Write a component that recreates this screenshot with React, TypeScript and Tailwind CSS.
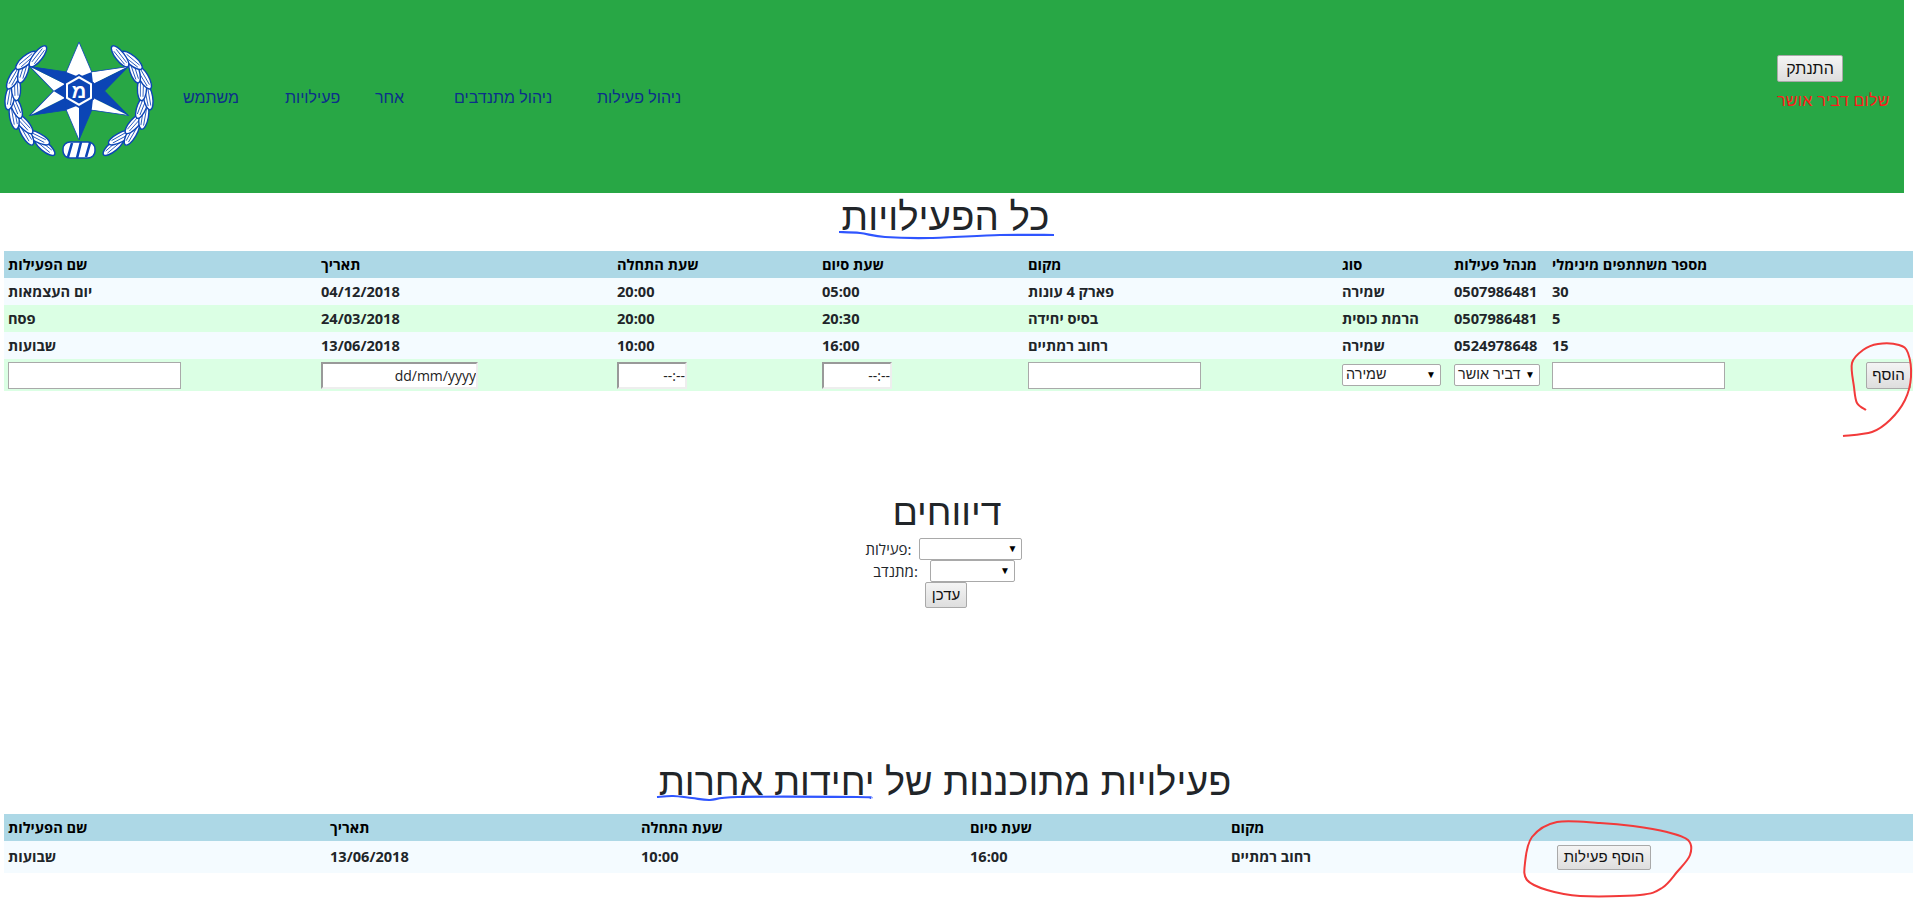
const FONT = "font-['Open_Sans','Liberation_Sans',sans-serif]";
const BLUE = "#0b45b5";

type Row = string[];

const activities: Row[] = [
  ["יום העצמאות", "04/12/2018", "20:00", "05:00", "פארק 4 עונות", "שמירה", "0507986481", "30"],
  ["פסח", "24/03/2018", "20:00", "20:30", "בסיס יחידה", "הרמת כוסית", "0507986481", "5"],
  ["שבועות", "13/06/2018", "10:00", "16:00", "רחוב רמתיים", "שמירה", "0524978648", "15"],
];

const headers = ["שם הפעילות", "תאריך", "שעת התחלה", "שעת סיום", "מקום", "סוג", "מנהל פעילות", "מספר משתתפים מינימלי"];

function Leaf({ x, y, rot }: { x: number; y: number; rot: number }) {
  return (
    <g transform={`translate(${x} ${y}) rotate(${rot})`}>
      <ellipse rx="13" ry="4.6" fill="#fff" stroke={BLUE} strokeWidth="1.4" />
      <path d="M-9 -1.4 L8 -1.8 M-9 1.3 L8 1.3" stroke={BLUE} strokeWidth="0.8" />
    </g>
  );
}

// star facets per tip, [left, right] seen from the centre
const tips: [number, string, string][] = [
  [0, "#fff", "#fff"],
  [60, "#fff", BLUE],
  [120, BLUE, "#fff"],
  [180, BLUE, "#fff"],
  [240, BLUE, "#fff"],
  [300, "#fff", BLUE],
];

function Logo() {
  const leaves: { x: number; y: number; rot: number }[] = [];
  // wreath: leaves follow the oval, paired inner and outer, open at the top
  [-1, 1].forEach((side) => {
    for (let a = 30; a <= 146; a += 10) {
      const rad = (a * Math.PI) / 180;
      const odd = Math.round((a - 30) / 10) % 2 === 1;
      const rx = odd ? 64 : 69;
      const ry = odd ? 53 : 57;
      const x = 79 + side * rx * Math.sin(rad);
      const y = 94 + ry * Math.cos(rad);
      const rot = -side * a + (odd ? side * 12 : -side * 10);
      leaves.push({ x, y, rot });
    }
  });
  return (
    <svg width="160" height="128" viewBox="0 30 160 128" className="shrink-0">
      {leaves.map((l, i) => (
        <Leaf key={i} x={l.x} y={l.y} rot={l.rot} />
      ))}
      <g transform="translate(79 88) scale(1.16 1)">
        <path d="M-11 -19 L11 -19 L22 0 L11 19 L-11 19 L-22 0 Z" fill={BLUE} />
        {tips.map(([t, left, right]) => (
          <g key={t} transform={`rotate(${t})`}>
            <path d="M0 -49 L-11 -19 L0 -14 Z" fill={left} />
            <path d="M0 -49 L11 -19 L0 -14 Z" fill={right} />
            <path d="M-11 -19 L0 -49 L11 -19" fill="none" stroke={BLUE} strokeWidth="0.8" />
          </g>
        ))}
      </g>
      <g transform="translate(79 88)">
        <path d="M0 -17 L15 -8.5 L15 8.5 L0 17 L-15 8.5 L-15 -8.5 Z" fill={BLUE} />
        <path d="M0 -15 L13 -7.5 L13 7.5 L0 15 L-13 7.5 L-13 -7.5 Z" fill="#fff" />
        <path d="M0 -12.5 L11 -6.3 L11 6.3 L0 12.5 L-11 6.3 L-11 -6.3 Z" fill={BLUE} />
        <text x="0" y="7" textAnchor="middle" fontSize="20" fontWeight="700" fill="#fff" fontFamily="'Liberation Sans', sans-serif">
          מ
        </text>
      </g>
      <g transform="translate(79 147)">
        <rect x="-16" y="-8" width="32" height="16" rx="7" fill="#fff" stroke={BLUE} strokeWidth="1.5" />
        <path d="M-11 7 L-7 -7 M-2 8 L2 -8 M7 7 L11 -7" stroke={BLUE} strokeWidth="2.6" />
      </g>
    </svg>
  );
}

function GrayButton({ children, className }: { children: string; className: string }) {
  return (
    <button
      type="button"
      className={`border border-[#a9a9a9] bg-linear-to-b from-[#f4f4f4] to-[#dedede] rounded-[2px] text-[#111] ${className}`}
    >
      {children}
    </button>
  );
}

function FakeSelect({ value, className }: { value?: string; className: string }) {
  return (
    <div className={`relative border border-[#a9a9a9] rounded-[2px] bg-white flex items-center pl-[3px] text-[14.4px] font-normal text-[#222] font-['Liberation_Sans',sans-serif] ${className}`}>
      <span>{value}</span>
      <span className="absolute right-[4px] top-[2px] text-[10px] text-black">▼</span>
    </div>
  );
}

function TextBox({ className, inset, hint }: { className: string; inset?: boolean; hint?: string }) {
  return (
    <input
      type="text"
      placeholder={hint}
      className={`block h-[27px] bg-white text-right text-[14px] font-normal outline-none placeholder:text-[#222] ${
        inset ? "border-2 border-t-[#999] border-l-[#999] border-r-[#eee] border-b-[#eee]" : "border border-[#a9a9a9]"
      } ${className}`}
    />
  );
}

// smooth line through the points of a hand drawn mark
function smooth(pts: number[][], closed = false) {
  const n = pts.length;
  const at = (i: number) => (closed ? pts[(i + n) % n] : pts[Math.max(0, Math.min(n - 1, i))]);
  let d = `M${pts[0][0]} ${pts[0][1]}`;
  const last = closed ? n : n - 1;
  for (let i = 0; i < last; i++) {
    const [p0, p1, p2, p3] = [at(i - 1), at(i), at(i + 1), at(i + 2)];
    const c1 = [p1[0] + (p2[0] - p0[0]) / 6, p1[1] + (p2[1] - p0[1]) / 6];
    const c2 = [p2[0] - (p3[0] - p1[0]) / 6, p2[1] - (p3[1] - p1[1]) / 6];
    d += ` C${c1[0]} ${c1[1]} ${c2[0]} ${c2[1]} ${p2[0]} ${p2[1]}`;
  }
  return d;
}

const cellClass = "px-[4px] py-0 whitespace-nowrap";

export default function App() {
  return (
    <div className={`${FONT} relative min-h-[922px] w-full overflow-hidden bg-white text-[#212529]`}>
      <header className="w-[1904px] h-[193px] bg-[#28a745] flex items-center">
        <Logo />
        <nav className="flex items-center ml-[23px] mt-[3px] text-[16px] text-[#0c2f8a] font-['Liberation_Sans',sans-serif]">
          <a className="w-[102px]">משתמש</a>
          <a className="w-[90px]">פעילויות</a>
          <a className="w-[79px]">אחר</a>
          <a className="w-[143px]">ניהול מתנדבים</a>
          <a>ניהול פעילות</a>
        </nav>
        <div className="ml-auto mr-[16px] self-start mt-[55px] w-[111px]">
          <GrayButton className="block w-[66px] h-[27px] text-[16px] font-['Liberation_Sans',sans-serif]">התנתק</GrayButton>
          <p className="mt-[9px] text-[16px] leading-[20px] tracking-[0.25px] text-[#ff1a1a] whitespace-nowrap font-['Liberation_Sans',sans-serif]">שלום דביר אושר</p>
        </div>
      </header>

      <h1 className="h-[58px] w-[1891px] text-center text-[38.5px] leading-[48px] font-['Liberation_Sans',sans-serif]">כל הפעילויות</h1>

      <div className="pl-[4px]">
        <table className="w-[1909px] table-fixed border-collapse text-left text-[14.6px] font-bold">
          <colgroup>
            <col className="w-[313px]" />
            <col className="w-[296px]" />
            <col className="w-[205px]" />
            <col className="w-[206px]" />
            <col className="w-[314px]" />
            <col className="w-[112px]" />
            <col className="w-[98px]" />
            <col className="w-[314px]" />
            <col />
          </colgroup>
          <thead>
            <tr className="h-[27px] bg-[#add8e6] text-black">
              {headers.map((h) => (
                <th key={h} className={`${cellClass} font-bold`}>{h}</th>
              ))}
              <th />
            </tr>
          </thead>
          <tbody>
            {activities.map((row, i) => (
              <tr key={row[0]} className={`h-[27px] ${i % 2 === 0 ? "bg-[#f4fbff]" : "bg-[#dbffe4]"}`}>
                {row.map((c, j) => (
                  <td key={j} className={cellClass}>{c}</td>
                ))}
                <td />
              </tr>
            ))}
            <tr className="h-[32px] bg-[#dbffe4] align-middle">
              <td className={cellClass}><TextBox className="w-[173px]" /></td>
              <td className={cellClass}><TextBox inset hint="dd/mm/yyyy" className="w-[157px]" /></td>
              <td className={cellClass}><TextBox inset hint="--:--" className="w-[70px]" /></td>
              <td className={cellClass}><TextBox inset hint="--:--" className="w-[70px]" /></td>
              <td className={cellClass}><TextBox className="w-[173px]" /></td>
              <td className={cellClass}><FakeSelect value="שמירה" className="w-[99px] h-[22px]" /></td>
              <td className={cellClass}><FakeSelect value="דביר אושר" className="w-[86px] h-[22px]" /></td>
              <td className={cellClass}><TextBox className="w-[173px]" /></td>
              <td className="py-0 pl-[4px]"><GrayButton className="block w-[45px] h-[27px] text-[15px] font-normal font-['Liberation_Sans',sans-serif]">הוסף</GrayButton></td>
            </tr>
          </tbody>
        </table>
      </div>

      <section className="mt-[99px] flex flex-col items-center w-[1904px] text-[15px]">
        <h2 className="mr-[10px] mb-[4px] text-[37.5px] leading-[44px] font-['Liberation_Sans',sans-serif]">דיווחים</h2>
        <div className="flex items-center h-[22px] pr-[16px]">
          <span className="mr-[8px]">פעילות:</span>
          <FakeSelect className="w-[103px] h-[22px]" />
        </div>
        <div className="flex items-center h-[22px] pr-[16px]">
          <span className="mr-[12px]">מתנדב:</span>
          <FakeSelect className="w-[85px] h-[22px]" />
        </div>
        <GrayButton className="block w-[42px] h-[26px] text-[15px] mr-[12px] font-['Liberation_Sans',sans-serif]">עדכן</GrayButton>
      </section>

      <h2 className="mt-[150px] h-[56px] w-[1890px] text-center text-[37.8px] leading-[48px] font-['Liberation_Sans',sans-serif]">
        פעילויות מתוכננות של יחידות אחרות
      </h2>

      <div className="pl-[4px]">
        <table className="w-[1909px] table-fixed border-collapse text-left text-[14.6px] font-bold">
          <colgroup>
            <col className="w-[322px]" />
            <col className="w-[311px]" />
            <col className="w-[329px]" />
            <col className="w-[261px]" />
            <col className="w-[322px]" />
            <col />
          </colgroup>
          <thead>
            <tr className="h-[27px] bg-[#add8e6] text-black">
              <th className={`${cellClass} font-bold`}>שם הפעילות</th>
              <th className={`${cellClass} font-bold`}>תאריך</th>
              <th className={`${cellClass} font-bold`}>שעת התחלה</th>
              <th className={`${cellClass} font-bold`}>שעת סיום</th>
              <th className={`${cellClass} font-bold`}>מקום</th>
              <th />
            </tr>
          </thead>
          <tbody>
            <tr className="h-[32px] bg-[#f4fbff]">
              <td className={cellClass}>שבועות</td>
              <td className={cellClass}>13/06/2018</td>
              <td className={cellClass}>10:00</td>
              <td className={cellClass}>16:00</td>
              <td className={cellClass}>רחוב רמתיים</td>
              <td className={cellClass}>
                <GrayButton className="block ml-[4px] w-[94px] h-[25px] text-[15px] font-normal font-['Liberation_Sans',sans-serif]">הוסף פעילות</GrayButton>
              </td>
            </tr>
          </tbody>
        </table>
      </div>

      {/* hand drawn marks that sit over the page */}
      <svg className="absolute left-0 top-0 pointer-events-none" width="1913" height="922" fill="none">
        <path d={smooth([[839, 232], [860, 233], [885, 237], [930, 238], [1000, 235], [1054, 235]])} stroke="#2f55ff" strokeWidth="2.2" />
        <path d={smooth([[657, 797], [673, 796], [692, 798], [710, 800], [738, 797], [857, 797], [871, 798]])} stroke="#2f55ff" strokeWidth="2.2" />
        <path
          d={smooth([[1866, 410], [1857, 403], [1854, 387], [1852, 363], [1863, 350], [1878, 344], [1899, 345], [1908, 353], [1911, 377], [1905, 400], [1890, 420], [1872, 432], [1843, 436]])}
          stroke="#f23a3a"
          strokeWidth="2"
        />
        <path
          d={smooth([[1557, 822], [1600, 823], [1633, 826], [1667, 832], [1688, 840], [1690, 855], [1677, 872], [1662, 888], [1640, 895], [1580, 896], [1547, 890], [1527, 880], [1525, 863], [1532, 837]], true)}
          stroke="#f23a3a"
          strokeWidth="2"
        />
      </svg>
    </div>
  );
}
